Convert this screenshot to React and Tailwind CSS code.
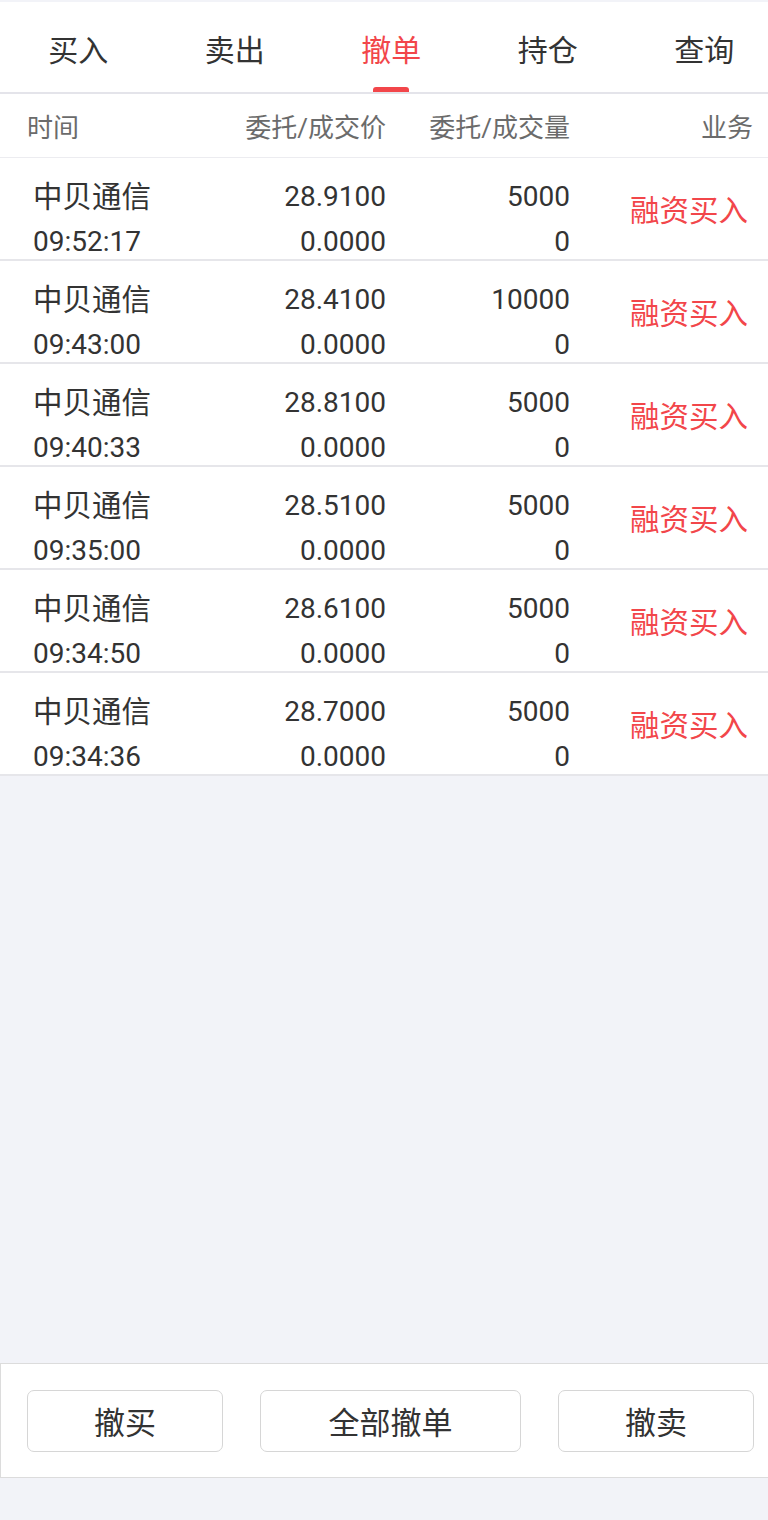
import React from "react";

const rows = [
  { name: "中贝通信", time: "09:52:17", price: "28.9100", qty: "5000" },
  { name: "中贝通信", time: "09:43:00", price: "28.4100", qty: "10000" },
  { name: "中贝通信", time: "09:40:33", price: "28.8100", qty: "5000" },
  { name: "中贝通信", time: "09:35:00", price: "28.5100", qty: "5000" },
  { name: "中贝通信", time: "09:34:50", price: "28.6100", qty: "5000" },
  { name: "中贝通信", time: "09:34:36", price: "28.7000", qty: "5000" },
];

const tabs = ["买入", "卖出", "撤单", "持仓", "查询"];

const font = { fontFamily: "Roboto, 'Noto Sans CJK SC', sans-serif" };

export default function App() {
  return (
    <div className="flex h-[1520px] w-[768px] flex-col overflow-hidden bg-[#f2f3f8]" style={font}>
      {/* tabs */}
      <div className="mt-[2px] flex h-[92px] shrink-0 overflow-hidden border-b-2 border-[#e4e4ea] bg-white">
        {tabs.map((t, i) => (
          <div key={t} className="relative flex w-[156.5px] shrink-0 items-center justify-center pt-[7px]">
            <span className={`text-[30px] leading-none ${i === 2 ? "text-[#f2464a]" : "text-[#333333]"}`}>{t}</span>
            {i === 2 && <div className="absolute bottom-0 left-1/2 h-[5px] w-[36px] -translate-x-1/2 rounded-t-[3px] bg-[#f2464a]" />}
          </div>
        ))}
      </div>

      {/* header */}
      <div className="grid h-[64px] shrink-0 grid-cols-[200px_186px_184px_1fr] items-center border-b border-[#ececf0] bg-white pt-[5px] text-[26px] text-[#6b6b6b]">
        <div className="pl-[27px]">时间</div>
        <div className="text-right">委托/成交价</div>
        <div className="text-right">委托/成交量</div>
        <div className="pr-[15px] text-right">业务</div>
      </div>

      {/* rows */}
      <div className="shrink-0 bg-white">
        {rows.map((r, i) => (
          <div key={i} className="grid h-[103px] grid-cols-[200px_186px_184px_1fr] items-start border-b-2 border-[#e6e6ea] pt-[17px]">
            <div className="flex flex-col pl-[33px] text-[#333333]">
              <span className="text-[29.5px] leading-[44px]">{r.name}</span>
              <span className="text-[28px] leading-[46px]">{r.time}</span>
            </div>
            <div className="flex flex-col text-right text-[#333333]">
              <span className="text-[28px] leading-[44px]">{r.price}</span>
              <span className="text-[28px] leading-[46px]">0.0000</span>
            </div>
            <div className="flex flex-col text-right text-[#333333]">
              <span className="text-[28px] leading-[44px]">{r.qty}</span>
              <span className="text-[28px] leading-[46px]">0</span>
            </div>
            <div className="flex h-[72px] items-center justify-end pr-[20px] text-[29.5px] text-[#f2464a]">融资买入</div>
          </div>
        ))}
      </div>

      <div className="flex-1" />

      {/* bottom actions */}
      <div className="flex h-[115px] shrink-0 items-center justify-between border-y border-l border-[#dcdcdc] bg-white pl-[26px] pr-[14px]">
        <button className="h-[62px] w-[196px] rounded-[7px] border border-[#d6d6d6] bg-white pt-[8px] text-[31px] text-[#333333]">撤买</button>
        <button className="h-[62px] w-[261px] rounded-[7px] border border-[#d6d6d6] bg-white pt-[8px] text-[31px] text-[#333333]">全部撤单</button>
        <button className="h-[62px] w-[196px] rounded-[7px] border border-[#d6d6d6] bg-white pt-[8px] text-[31px] text-[#333333]">撤卖</button>
      </div>
      <div className="h-[42px] shrink-0" />
    </div>
  );
}
